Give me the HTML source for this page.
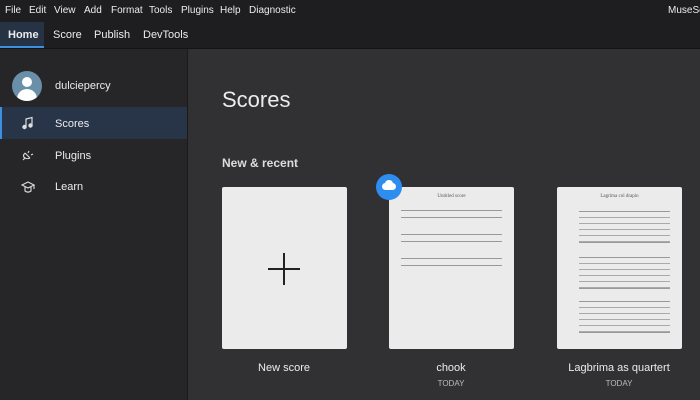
<!DOCTYPE html><html><head><style>
body{margin:0;width:700px;height:400px;overflow:hidden;background:#2d2d30;font-family:"Liberation Sans",sans-serif;color:#ececec;position:relative}
.a{position:absolute}
.menu{left:0;top:0;width:700px;height:22px;background:#1e1e20;font-size:10px}
.menu span{position:absolute;top:5px}
.tabs{left:0;top:22px;width:700px;height:26px;background:#1e1e20;border-bottom:1px solid #141414;font-size:11px}
.tabs span{position:absolute;top:7px}
.side{left:0;top:49px;width:187px;height:351px;background:#262628;border-right:1px solid #1a1a1a}
.main{left:188px;top:49px;width:512px;height:351px;background:#313133}
.card{background:#ebebeb;border-radius:2px;width:125px;height:162px;top:187px}
.lbl{font-size:11px;text-align:center;width:160px}
.t{font-size:8px;color:#bbb;text-align:center;width:160px}
.st{position:absolute;left:12px;right:12px;height:6px;border-top:1px solid #999;border-bottom:1px solid #999}
</style></head><body>
<div class="a menu"><span style="left:5px">File</span><span style="left:29px">Edit</span><span style="left:54px">View</span><span style="left:84px">Add</span><span style="left:111px">Format</span><span style="left:149px">Tools</span><span style="left:181px">Plugins</span><span style="left:220px">Help</span><span style="left:249px">Diagnostic</span><span style="left:668px">MuseSc</span></div>
<div class="a tabs"><div class="a" style="left:0;top:0;width:44px;height:26px;background:#263344;border-bottom:2px solid #3d8fe0;box-sizing:border-box"></div><span style="left:8px;font-weight:bold">Home</span><span style="left:53px">Score</span><span style="left:94px">Publish</span><span style="left:143px">DevTools</span></div>
<div class="a side">
<div class="a" style="left:12px;top:22px;width:30px;height:30px;border-radius:50%;background:#6a8fa8;overflow:hidden"><div class="a" style="left:10px;top:6px;width:10px;height:10px;border-radius:50%;background:#fff"></div><div class="a" style="left:5px;top:18px;width:20px;height:16px;border-radius:10px 10px 0 0;background:#fff"></div></div>
<div class="a" style="left:55px;top:31px;font-size:11px">dulciepercy</div>
<div class="a" style="left:0;top:58px;width:187px;height:32px;background:#283548;border-left:2px solid #3d8fe0;box-sizing:border-box"></div>
<svg class="a" style="left:21px;top:67px" width="14" height="14" viewBox="0 0 14 14" fill="none" stroke="#ddd" stroke-width="1.2"><path d="M5 11V3l6-1.5V9.5"/><circle cx="3.5" cy="11" r="1.6" fill="#ddd"/><circle cx="9.5" cy="9.5" r="1.6" fill="#ddd"/></svg>
<div class="a" style="left:55px;top:69px;font-size:11px">Scores</div>
<svg class="a" style="left:21px;top:99px" width="14" height="14" viewBox="0 0 14 14" fill="none" stroke="#ddd" stroke-width="1.1"><path d="M4 5l5 5M4 5c-2 2-2 4 0 5s3 1 5 0M2 12l2-2M8 3L7 5M12 6l-2 1"/></svg>
<div class="a" style="left:55px;top:101px;font-size:11px">Plugins</div>
<svg class="a" style="left:21px;top:131px" width="14" height="14" viewBox="0 0 14 14" fill="none" stroke="#ddd" stroke-width="1.1"><path d="M1 5l6-3 6 3-6 3z M4 7v4c2 1.5 4 1.5 6 0V7M13 5v4"/></svg>
<div class="a" style="left:55px;top:132px;font-size:11px">Learn</div>
</div>
<div class="a main"></div>
<div class="a" style="left:222px;top:87px;font-size:22px">Scores</div>
<div class="a" style="left:222px;top:156px;font-size:12px;font-weight:bold;color:#ddd">New &amp; recent</div>
<div class="a card" style="left:222px"><div class="a" style="left:46px;top:81px;width:32px;height:2px;background:#222"></div><div class="a" style="left:61px;top:66px;width:2px;height:32px;background:#222"></div></div>
<div class="a card" style="left:389px">
<div class="a" style="left:0;width:125px;top:7px;font-size:5px;text-align:center;color:#555;font-family:'Liberation Serif'">Untitled score</div>
<div class="st" style="top:23px"></div><div class="st" style="top:47px"></div><div class="st" style="top:71px"></div></div>
<div class="a" style="left:376px;top:174px;width:26px;height:26px;border-radius:50%;background:#2d8ef0"><div class="a" style="left:6px;top:9px;width:14px;height:7px;background:#fff;border-radius:4px"></div><div class="a" style="left:9px;top:6px;width:8px;height:7px;background:#fff;border-radius:50%"></div></div>
<div class="a card" style="left:557px">
<div class="a" style="left:0;width:125px;top:7px;font-size:5px;text-align:center;color:#555;font-family:'Liberation Serif'">Lagrima col drapin</div>
<div class="st" style="top:24px;height:30px;left:22px;background:repeating-linear-gradient(#ebebeb 0 5px,#aaa 5px 6px)"></div>
<div class="st" style="top:70px;height:30px;left:22px;background:repeating-linear-gradient(#ebebeb 0 5px,#aaa 5px 6px)"></div>
<div class="st" style="top:114px;height:30px;left:22px;background:repeating-linear-gradient(#ebebeb 0 5px,#aaa 5px 6px)"></div></div>
<div class="a lbl" style="left:204px;top:362px">New score</div>
<div class="a lbl" style="left:371px;top:362px">chook</div>
<div class="a t" style="left:371px;top:379px">TODAY</div>
<div class="a lbl" style="left:539px;top:362px">Lagbrima as quartert</div>
<div class="a t" style="left:539px;top:379px">TODAY</div>
</body></html>
